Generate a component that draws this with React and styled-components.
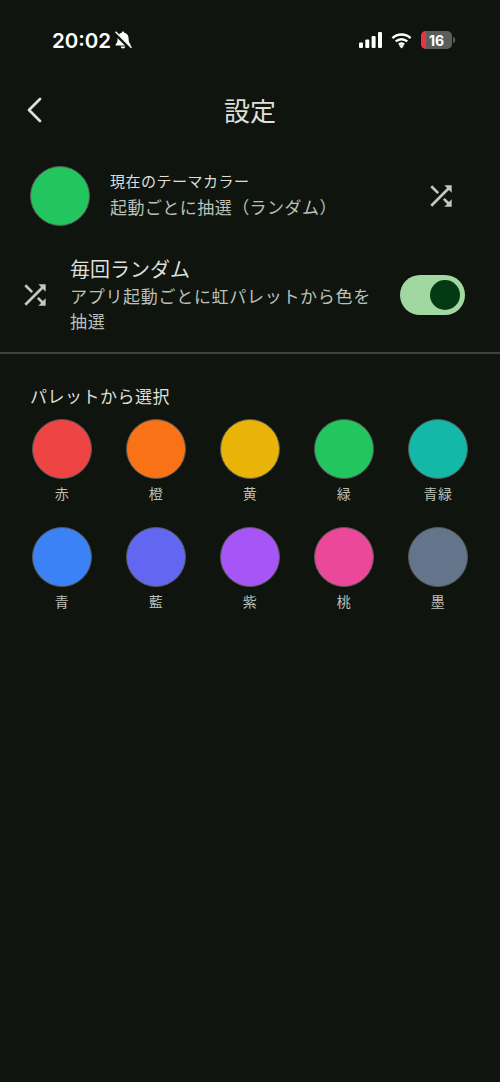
import styled, { createGlobalStyle } from 'styled-components';
import { MdShuffle } from 'react-icons/md';

const GlobalStyle = createGlobalStyle`
  html, body {
    margin: 0;
    padding: 0;
    background: #0f140f;
  }
  * {
    box-sizing: border-box;
  }
`;

const Screen = styled.div`
  width: 500px;
  height: 1082px;
  overflow: hidden;
  background: #0f140f;
  color: #dedfd9;
  font-family: "Noto Sans CJK JP", "Noto Sans", sans-serif;
`;

const StatusBar = styled.div`
  height: 80px;
  padding: 26px 45px 0 52px;
  display: flex;
  justify-content: space-between;
  align-items: flex-start;
`;

const StatusGroup = styled.div`
  display: flex;
  align-items: center;
  height: 28px;
  gap: ${(p) => p.$gap}px;
`;

const Time = styled.span`
  font-family: Inter, "Liberation Sans", sans-serif;
  font-size: 20.5px;
  font-weight: 600;
  color: #fff;
`;

const Battery = styled.div`
  position: relative;
  width: 31px;
  height: 18px;
  border-radius: 5px;
  overflow: hidden;
  background: #5b5e5b;
  display: flex;
  align-items: center;
  justify-content: center;
  font-family: Inter, "Liberation Sans", sans-serif;
  font-size: 14px;
  font-weight: 700;
  color: #fff;
  &::before {
    content: '';
    position: absolute;
    left: 0;
    top: 0;
    bottom: 0;
    width: 5px;
    background: #ee3340;
  }
`;

const BatteryWrap = styled.div`
  display: flex;
  align-items: center;
  gap: 1px;
  &::after {
    content: '';
    width: 2px;
    height: 6px;
    border-radius: 0 2px 2px 0;
    background: #5b5e5b;
  }
`;

const Header = styled.div`
  height: 60px;
  display: flex;
  align-items: center;
  justify-content: center;
  position: relative;
`;

const BackButton = styled.div`
  position: absolute;
  left: 20px;
  top: 15px;
  width: 30px;
  height: 30px;
  display: flex;
  align-items: center;
  justify-content: center;
`;

const Title = styled.h1`
  margin: 0;
  font-size: 26px;
  font-weight: 400;
  line-height: 40px;
  color: #dedfd9;
`;

const CurrentRow = styled.div`
  margin-top: 26px;
  height: 60px;
  padding: 0 43px 0 30px;
  display: flex;
  align-items: center;
  gap: 20px;
`;

const Swatch = styled.div`
  width: 60px;
  height: 60px;
  flex: none;
  border-radius: 50%;
  background: ${(p) => p.$color};
  border: 1.5px solid #565a56;
`;

const CurrentText = styled.div`
  flex: 1;
  display: flex;
  flex-direction: column;
  padding-bottom: 2px;
`;

const CurrentLabel = styled.div`
  font-size: 15px;
  line-height: 24px;
  letter-spacing: 0.5px;
  color: #dedfd9;
`;

const CurrentValue = styled.div`
  font-size: 17px;
  line-height: 28px;
  letter-spacing: 0.45px;
  color: #bcc0b8;
`;

const ShuffleIcon = styled(MdShuffle)`
  flex: none;
  font-size: 32px;
  color: #c4c8bf;
`;

const RandomRow = styled.div`
  margin-top: 28px;
  padding: 0 35px 0 19px;
  display: flex;
  align-items: center;
  gap: 19px;
`;

const RandomText = styled.div`
  flex: 1;
  padding-bottom: 2px;
`;

const RandomTitle = styled.div`
  font-size: 20px;
  line-height: 29px;
  color: #dedfd9;
`;

const RandomDesc = styled.div`
  font-size: 17px;
  line-height: 25px;
  letter-spacing: 0.7px;
  color: #bcc0b8;
`;

const Toggle = styled.div`
  width: 65px;
  height: 40px;
  flex: none;
  border-radius: 20px;
  background: #a1d7a1;
  display: flex;
  align-items: center;
  justify-content: flex-end;
  padding-right: 5px;
`;

const Thumb = styled.div`
  width: 30px;
  height: 30px;
  border-radius: 50%;
  background: #033a14;
`;

const Divider = styled.div`
  margin-top: 17px;
  height: 2px;
  background: #3f433e;
`;

const SectionLabel = styled.div`
  margin-top: 29px;
  padding-left: 30px;
  font-size: 17px;
  line-height: 26px;
  letter-spacing: 0.5px;
  color: #dedfd9;
`;

const Palette = styled.div`
  margin-top: 10px;
  padding: 0 15px;
  display: grid;
  grid-template-columns: repeat(5, 94px);
  grid-auto-rows: 108px;
`;

const PaletteItem = styled.div`
  display: flex;
  flex-direction: column;
  align-items: center;
  gap: 4px;
`;

const ItemLabel = styled.div`
  font-size: 14px;
  line-height: 20px;
  letter-spacing: 0.5px;
  color: #bcc0b8;
`;

const colors = [
  { name: '赤', color: '#ef4444' },
  { name: '橙', color: '#f97316' },
  { name: '黄', color: '#eab308' },
  { name: '緑', color: '#22c55e' },
  { name: '青緑', color: '#14b8a6' },
  { name: '青', color: '#3b82f6' },
  { name: '藍', color: '#6366f1' },
  { name: '紫', color: '#a855f7' },
  { name: '桃', color: '#ec4899' },
  { name: '墨', color: '#64748b' },
];

const BellOff = () => (
  <svg width="20" height="20" viewBox="0 0 20 20">
    <path
      fill="#fff"
      d="M10 1.500c-.8 0-1.300.6-1.300 1.300C6 3.400 4.600 5.600 4.600 8.400c0 3.300-.7 4.600-2 6v1h15v-1c-1.300-1.400-2-2.700-2-6 0-2.800-1.400-5-4.300-5.600 0-.7-.5-1.300-1.300-1.300zM7.700 16.400c.2 1.200 1.100 2 2.300 2s2.100-.8 2.300-2z"
    />
    <path stroke="#0f140f" strokeWidth="3" d="M2 3.500l14.500 14.500" />
    <path stroke="#fff" strokeWidth="1.400" d="M2.500 1.800l16 16" />
  </svg>
);

const Signal = () => (
  <svg width="23" height="16" viewBox="0 0 23 16" fill="#fff">
    <rect x="0" y="10.500" width="4" height="5.500" rx="1" />
    <rect x="6.300" y="7.500" width="4" height="8.500" rx="1" />
    <rect x="12.600" y="4" width="4" height="12" rx="1" />
    <rect x="19" y="0" width="4" height="16" rx="1" />
  </svg>
);

const Wifi = () => (
  <svg width="21" height="17" viewBox="0 0 22 17" fill="none" stroke="#fff" strokeWidth="2.600">
    <path d="M1.500 6C6.800 1 15.200 1 20.500 6" />
    <path d="M5 9.500c3.500-3.200 8.500-3.200 12 0" />
    <path d="M8.300 12.800c1.600-1.300 3.800-1.300 5.400 0" />
    <path fill="#fff" stroke="none" d="M11 17l-2.600-3c1.500-1 3.700-1 5.200 0z" />
  </svg>
);

const Chevron = () => (
  <svg width="18" height="26" viewBox="0 0 18 26" fill="none" stroke="#dedfd9" strokeWidth="2.800" strokeLinecap="round" strokeLinejoin="round">
    <path d="M14 2L3 13l11 11" />
  </svg>
);

const App = () => {
  return (
    <Screen>
      <GlobalStyle />
      <StatusBar>
        <StatusGroup $gap={2}>
          <Time>20:02</Time>
          <BellOff />
        </StatusGroup>
        <StatusGroup $gap={9}>
          <Signal />
          <Wifi />
          <BatteryWrap>
            <Battery>16</Battery>
          </BatteryWrap>
        </StatusGroup>
      </StatusBar>
      <Header>
        <BackButton>
          <Chevron />
        </BackButton>
        <Title>設定</Title>
      </Header>
      <CurrentRow>
        <Swatch $color="#22c55e" />
        <CurrentText>
          <CurrentLabel>現在のテーマカラー</CurrentLabel>
          <CurrentValue>起動ごとに抽選（ランダム）</CurrentValue>
        </CurrentText>
        <ShuffleIcon />
      </CurrentRow>
      <RandomRow>
        <ShuffleIcon />
        <RandomText>
          <RandomTitle>毎回ランダム</RandomTitle>
          <RandomDesc>アプリ起動ごとに虹パレットから色を抽選</RandomDesc>
        </RandomText>
        <Toggle>
          <Thumb />
        </Toggle>
      </RandomRow>
      <Divider />
      <SectionLabel>パレットから選択</SectionLabel>
      <Palette>
        {colors.map((item) => (
          <PaletteItem key={item.name}>
            <Swatch $color={item.color} />
            <ItemLabel>{item.name}</ItemLabel>
          </PaletteItem>
        ))}
      </Palette>
    </Screen>
  );
};

export default App;
